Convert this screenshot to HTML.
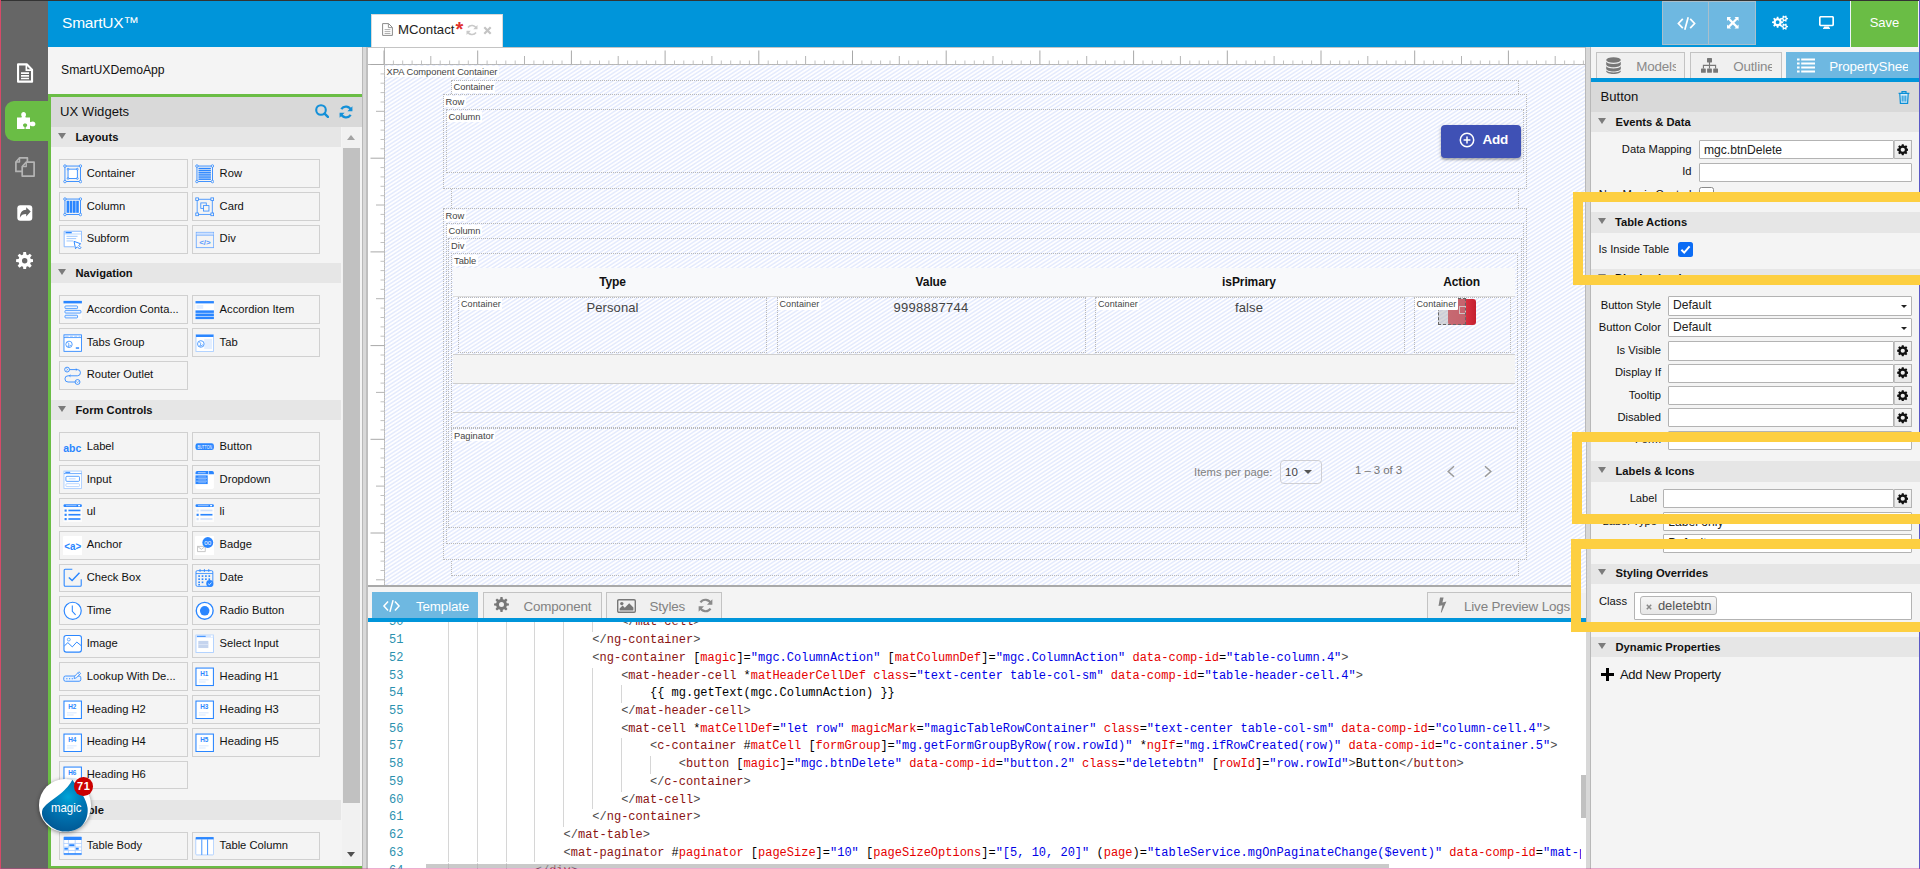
<!DOCTYPE html>
<html lang="en">
<head>
<meta charset="utf-8">
<title>SmartUX</title>
<style>
*{box-sizing:border-box}
html,body{margin:0;padding:0}
body{width:1920px;height:869px;overflow:hidden;position:relative;background:#f4f4f4;font-family:"Liberation Sans",Arial,sans-serif;font-size:12px;color:#111}
.a{position:absolute}
svg{display:block}
/* frame */
#topline{left:0;top:0;width:1920px;height:1px;background:#333}
#leftline{left:0;top:0;width:1px;height:869px;background:#d64a68}
#side{left:1px;top:1px;width:47px;height:868px;background:#666}
#top{left:48px;top:1px;width:1872px;height:46px;background:#0095da}
#brand{left:62px;top:13.300px;color:#fff;font-size:15.500px;line-height:20px;letter-spacing:-0.2px}
/* left panel */
#lp{left:48px;top:47px;width:314px;height:822px;background:#f4f4f4}
#app{left:61px;top:62px;font-size:12.200px;line-height:16px;color:#111}
#gtop{left:48px;top:94px;width:314px;height:3px;background:#6abd45}
#gleft{left:48px;top:94px;width:3px;height:775px;background:#6abd45}
#gbot{left:48px;top:865.500px;width:314px;height:3.500px;background:#6abd45}
#uxh{left:51px;top:97px;width:311px;height:30px;background:#d9d9d9}
#uxt{left:60px;top:103px;font-size:13.100px;line-height:18px;color:#111}
.sh{left:51px;width:290px;height:20.200px;background:#e6e6e6}
.sh b{position:absolute;left:24.500px;top:3.300px;font-size:11.200px;line-height:14px}
.tri{position:absolute;left:6.800px;top:5.800px;width:0;height:0;border-left:4px solid transparent;border-right:4px solid transparent;border-top:6.500px solid #7b7b7b}
.w{height:28.800px;border:1px solid #d0d0d0;background:#f4f4f4}
.w span{position:absolute;left:26.500px;top:5.500px;font-size:11.200px;line-height:14px;white-space:nowrap;color:#111}
.w svg{position:absolute;left:2.400px;top:3.900px;width:19.400px;height:19.600px}
.c2 svg{left:1.800px}
.c1{left:59.200px;width:128.600px}
.c2{left:192.100px;width:127.800px}
#ftab{left:371px;top:14px;width:131.500px;height:33px;background:#fff;border:1px solid #d9d9d9;border-bottom:none}
#ftab span{position:absolute;left:26px;top:6.700px;font-size:13.200px;line-height:16px;color:#222}
#ftab i{position:absolute;left:83.500px;top:3.600px;font-style:normal;color:#e0312f;font-size:20px;line-height:20px;font-weight:bold}
.tb{top:1px;height:44px;background:#6eb8e1;border:1px solid #a9bfcc}
#save{left:1851px;top:1px;width:67px;height:46px;background:#6abd45;color:#fff;font-size:13px;line-height:44px;text-align:center}
#spl1{left:361.600px;top:47px;width:6.200px;height:822px;background:linear-gradient(90deg,#b9b9b9 0,#b9b9b9 1.300px,#d9d9d9 1.300px,#d9d9d9 4.500px,#bfbfbf 4.500px,#bfbfbf 6.200px)}
#spl2{left:1585.200px;top:47px;width:5.800px;height:822px;background:linear-gradient(90deg,#b9b9b9 0,#b9b9b9 .8px,#d8d8d8 .8px,#d8d8d8 4.700px,#b8b8b8 4.700px,#b8b8b8 5.800px)}
.st{background:repeating-linear-gradient(147deg,#fff 0,#fdfdff .8px,#e5ebfd 1.600px,#e5ebfd 2.300px,#fdfdff 3.100px,#fff 3.250px) fixed}
#cv{left:368px;top:47px;width:1217.500px;height:538px;background:#fff;overflow:hidden}
.d{border:1px dotted #b9b9b9}
.lb{background:#fff;color:#444;font-size:9.300px;line-height:11px;height:11.500px;padding:1.300px 1.500px 0;overflow:hidden;white-space:nowrap;border-radius:1px}
.lb2{font-size:9px;letter-spacing:.1px}
#rh{left:368px;top:47px;width:1217.500px;height:17.500px;background:#fff;border-bottom:1px solid #b5b5b5}
#rv{left:368px;top:64.500px;width:16.500px;height:520.500px;background:#fff;border-right:1px solid #c5c5c5}
.th{font-weight:bold;font-size:12px;line-height:14px;color:#111;text-align:center;top:275px;letter-spacing:-.1px}
.td{font-size:13px;line-height:15px;color:#444;text-align:center;top:300px;letter-spacing:.1px}
#bt{left:368px;top:586.500px;width:1217.500px;height:31.500px;background:#f4f4f4}
.tab{top:592.200px;height:25.800px;border:1px solid #c3c3c3;border-bottom:none;background:#f0f0f0;color:#828282;font-size:13.400px;line-height:16px;letter-spacing:-.15px}
.tab span{position:absolute;top:5.500px;white-space:nowrap}
.tab.on{background:#6eb8e1;border-color:#6eb8e1;color:#fff}
#bl{left:368px;top:617.700px;width:1217.500px;height:4.300px;background:#0095da}
#ed{left:368px;top:622px;width:1213px;height:247px;background:#fff;overflow:hidden;font-family:"Liberation Mono","DejaVu Sans Mono",monospace;font-size:12px}
#ed .l{position:absolute;left:0;height:17.720px;line-height:17.720px;white-space:pre;width:1213px;color:#000}
#ed .n{position:absolute;left:0;width:35.500px;text-align:right;color:#2b91af}
#ed .c{position:absolute;left:51.500px}
#ed .g{position:absolute;top:0;width:1px;height:17.720px;background:#d6d6d6}
.t{color:#8a1212}.p{color:#4a4a4a}.k{color:#e50000}.v{color:#0000e6}
#rp{left:1591px;top:47px;width:329px;height:822px;background:#f4f4f4}
.rt{top:52.400px;height:26.200px;border:1px solid #c3c3c3;border-bottom:none;background:#f0f0f0;color:#8a8a8a;font-size:13.400px;line-height:16px;overflow:hidden;letter-spacing:-.15px}
.rt span{position:absolute;top:5.500px;white-space:nowrap;overflow:hidden}
.rt.on{background:#6eb8e1;border-color:#6eb8e1;color:#fff}
#rbl{left:1591px;top:78.400px;width:329px;height:3.600px;background:#0095da}
#rh1{left:1591px;top:82px;width:329px;height:30px;background:#d9d9d9}
.rs{left:1591px;width:329px;height:20.200px;background:#e6e6e6}
.rs b{position:absolute;left:24.500px;top:2.600px;font-size:11.200px;line-height:14px;color:#111}
.rs .tri{left:7.200px;top:5.700px}
.pl{font-size:11.200px;line-height:14px;color:#111;text-align:right;white-space:nowrap;margin-top:-.7px}
.in{height:19.200px;background:#fff;border:1px solid #b3b3b3;border-radius:1px;font-size:12.100px;line-height:18.600px;color:#222;padding-left:4px;white-space:nowrap;overflow:hidden}
.gb{width:18.500px;height:19.200px;border:1px solid #b3b3b3;border-left-color:#c4c4c4;background:linear-gradient(#f5f5f5,#e9e9e9)}
.gb svg{position:absolute;left:2.200px;top:2.800px;width:11.500px;height:11.500px}
.car{width:0;height:0;border-left:3px solid transparent;border-right:3px solid transparent;border-top:3.500px solid #222}
.yb{border:10px solid #fdcf41;border-right:none}
</style>
</head>
<body>

<div class="a" id="lp"></div>
<div class="a" id="side"></div>
<div class="a" id="top"></div>
<div class="a" id="topline"></div>
<div class="a" id="leftline"></div>
<div class="a" id="brand">SmartUX&#8482;</div>
<div class="a" id="app">SmartUXDemoApp</div>
<div class="a" id="gtop"></div><div class="a" id="gleft"></div><div class="a" id="gbot"></div>
<div class="a" id="uxh"></div><div class="a" id="uxt">UX Widgets</div>
<div class="a" style="left:5px;top:101px;width:46px;height:39.5px;background:#6abd45;border-radius:9px 0 0 9px"></div>
<div class="a" style="left:15.8px;top:63.4px"><svg width="18" height="20" viewBox="0 0 17 19"><path d="M1.900 1.300h8.300l5 5v11.400H1.900z" fill="none" stroke="#fff" stroke-width="2" stroke-linejoin="round"/><path d="M9.800 1.500v5.200h5.200" fill="none" stroke="#fff" stroke-width="1.600"/><path d="M4.700 9.600h7.600M4.700 12.200h7.600M4.700 14.800h7.600" stroke="#fff" stroke-width="1.500"/></svg></div>
<div class="a" style="left:16px;top:110px"><svg width="21" height="20" viewBox="0 0 21 20"><path d="M1 7.4h4.3c.5 0 .7-.4.5-.8C5.4 6 5.2 5.400 5.200 4.700 5.200 3.100 6.200 2 7.600 2s2.400 1.100 2.400 2.700c0 .7-.2 1.300-.6 1.900-.2.400 0 .8.500.8H14v4.200c0 .5.400.7.800.5.600-.4 1.200-.6 1.900-.6 1.600 0 2.700 1 2.700 2.400s-1.100 2.400-2.700 2.400c-.7 0-1.300-.2-1.900-.6-.4-.2-.8 0-.8.500V19H9.600v-1.300c0-.5.300-.7.600-.9.600-.3 1-.8 1-1.500 0-1-.9-1.700-2.100-1.700S7 14.300 7 15.300c0 .7.400 1.200 1 1.500.3.200.6.400.6.900V19H1z" fill="#fff"/></svg></div>
<div class="a" style="left:14.5px;top:156.5px"><svg width="20" height="20" viewBox="0 0 20 20"><g fill="none" stroke="#b4b4b4" stroke-width="1.7" stroke-linejoin="round"><path d="M7.2 14.400H.9V5l3.700-4.100h7.800v4.300"/><path d="M4.600.9V5H.9" stroke-width="1.300"/><path d="M7.200 9.500l4.100-4.300h7.800v13.900H7.200z"/><path d="M11.300 5.200v4.300H7.200" stroke-width="1.300"/></g></svg></div>
<div class="a" style="left:17px;top:205px"><svg width="16" height="16" viewBox="0 0 16 16"><rect x=".3" y=".3" width="15" height="15.400" rx="3" fill="#fff"/><path d="M13.700 6.400L9.200 2.300v2.500C5.300 5 2.900 7.500 2.900 12.800c1.300-2.700 3.100-3.700 6.300-3.700v2.500z" fill="#666"/></svg></div>
<div class="a" style="left:15.7px;top:252px"><svg width="17.4" height="17.4" viewBox="0 0 17.4 17.4"><path d="M14.78 7.06 L17.29 7.33 L17.29 10.07 L14.78 10.34 L14.16 11.84 L15.74 13.80 L13.80 15.74 L11.84 14.16 L10.34 14.78 L10.07 17.29 L7.33 17.29 L7.06 14.78 L5.56 14.16 L3.60 15.74 L1.66 13.80 L3.24 11.84 L2.62 10.34 L0.11 10.07 L0.11 7.33 L2.62 7.06 L3.24 5.56 L1.66 3.60 L3.60 1.66 L5.56 3.24 L7.06 2.62 L7.33 0.11 L10.07 0.11 L10.34 2.62 L11.84 3.24 L13.80 1.66 L15.74 3.60 L14.16 5.56Z M11.40 8.70 A2.7 2.7 0 1 0 6.00 8.70 A2.7 2.7 0 1 0 11.40 8.70Z" fill="#fff" fill-rule="evenodd"/></svg></div>
<div class="a sh" style="top:127px"><i class="tri"></i><b>Layouts</b></div>
<div class="a w c1" style="top:159.20px"><svg width="20" height="20" viewBox="0 0 20 20"><rect x="2" y="2" width="16" height="16" fill="none" stroke="#2a86ff" stroke-width=".9"/><rect x="5.2" y="5.2" width="9.6" height="9.6" fill="#fff" stroke="#2a86ff" stroke-width=".9"/><circle cx="2" cy="2" r="1.3" fill="#f4f4f4" stroke="#2a86ff" stroke-width=".8"/><circle cx="18" cy="2" r="1.3" fill="#f4f4f4" stroke="#2a86ff" stroke-width=".8"/><circle cx="2" cy="18" r="1.3" fill="#f4f4f4" stroke="#2a86ff" stroke-width=".8"/><circle cx="18" cy="18" r="1.3" fill="#f4f4f4" stroke="#2a86ff" stroke-width=".8"/><circle cx="5.2" cy="5.2" r="0.9" fill="#f4f4f4" stroke="#2a86ff" stroke-width=".8"/><circle cx="14.8" cy="5.2" r="0.9" fill="#f4f4f4" stroke="#2a86ff" stroke-width=".8"/><circle cx="5.2" cy="14.8" r="0.9" fill="#f4f4f4" stroke="#2a86ff" stroke-width=".8"/><circle cx="14.8" cy="14.8" r="0.9" fill="#f4f4f4" stroke="#2a86ff" stroke-width=".8"/></svg><span>Container</span></div>
<div class="a w c2" style="top:159.20px"><svg width="20" height="20" viewBox="0 0 20 20"><rect x="2" y="2" width="16" height="16" fill="none" stroke="#2a86ff" stroke-width=".9"/><rect x="3.6" y="3.8" width="12.8" height="1.5" fill="#2a86ff"/><rect x="3.6" y="6.0" width="12.8" height="1.5" fill="#2a86ff"/><rect x="3.6" y="8.2" width="12.8" height="1.5" fill="#2a86ff"/><rect x="3.6" y="10.4" width="12.8" height="1.5" fill="#2a86ff"/><rect x="3.6" y="12.6" width="12.8" height="1.5" fill="#2a86ff"/><rect x="3.6" y="14.8" width="12.8" height="1.5" fill="#2a86ff"/><circle cx="2" cy="2" r="1.3" fill="#f4f4f4" stroke="#2a86ff" stroke-width=".8"/><circle cx="18" cy="2" r="1.3" fill="#f4f4f4" stroke="#2a86ff" stroke-width=".8"/><circle cx="2" cy="18" r="1.3" fill="#f4f4f4" stroke="#2a86ff" stroke-width=".8"/><circle cx="18" cy="18" r="1.3" fill="#f4f4f4" stroke="#2a86ff" stroke-width=".8"/></svg><span>Row</span></div>
<div class="a w c1" style="top:192.05px"><svg width="20" height="20" viewBox="0 0 20 20"><rect x="2" y="2" width="16" height="16" fill="none" stroke="#2a86ff" stroke-width=".9"/><rect x="3.7" y="3.8" width="2.7" height="12.4" fill="#2a86ff"/><rect x="7.0" y="3.8" width="2.7" height="12.4" fill="#2a86ff"/><rect x="10.3" y="3.8" width="2.7" height="12.4" fill="#2a86ff"/><rect x="13.6" y="3.8" width="2.7" height="12.4" fill="#2a86ff"/><circle cx="2" cy="2" r="1.3" fill="#f4f4f4" stroke="#2a86ff" stroke-width=".8"/><circle cx="18" cy="2" r="1.3" fill="#f4f4f4" stroke="#2a86ff" stroke-width=".8"/><circle cx="2" cy="18" r="1.3" fill="#f4f4f4" stroke="#2a86ff" stroke-width=".8"/><circle cx="18" cy="18" r="1.3" fill="#f4f4f4" stroke="#2a86ff" stroke-width=".8"/></svg><span>Column</span></div>
<div class="a w c2" style="top:192.05px"><svg width="20" height="20" viewBox="0 0 20 20"><rect x="2.2" y="2.2" width="15.6" height="15.6" fill="none" stroke="#2a86ff" stroke-width=".8"/><rect x="6" y="6" width="5.6" height="5.6" fill="none" stroke="#2a86ff" stroke-width=".8"/><rect x="8.8" y="8.8" width="5.6" height="5.6" fill="#f4f4f4" stroke="#2a86ff" stroke-width=".8"/><rect x="0.8000000000000003" y="0.8000000000000003" width="2.8" height="2.8" fill="#f4f4f4" stroke="#2a86ff" stroke-width=".8"/><rect x="16.400000000000002" y="0.8000000000000003" width="2.8" height="2.8" fill="#f4f4f4" stroke="#2a86ff" stroke-width=".8"/><rect x="0.8000000000000003" y="16.400000000000002" width="2.8" height="2.8" fill="#f4f4f4" stroke="#2a86ff" stroke-width=".8"/><rect x="16.400000000000002" y="16.400000000000002" width="2.8" height="2.8" fill="#f4f4f4" stroke="#2a86ff" stroke-width=".8"/></svg><span>Card</span></div>
<div class="a w c1" style="top:224.90px"><svg width="20" height="20" viewBox="0 0 20 20"><path d="M11.500 17.200H1.200V1.200h18v11" fill="#fff" stroke="#7db3ff" stroke-width=".9"/><path d="M1.200 4h18" stroke="#9cc6ff" stroke-width=".7"/><path d="M2.600 2.600h6.400" stroke="#2a86ff" stroke-width="1.400"/><path d="M3.600 6.400h11.400M3.600 8.800h10M3.600 11.200h7" stroke="#9cc6ff" stroke-width="1"/><path d="M11.400 11.600l1.500 7.600 1.900-2 2.300 2.300 1.400-1.400-2.300-2.300 2-1.700z" fill="#fff" stroke="#2a86ff" stroke-width="1" stroke-linejoin="round"/></svg><span>Subform</span></div>
<div class="a w c2" style="top:224.90px"><svg width="20" height="20" viewBox="0 0 20 20"><rect x="1.300" y="2.300" width="18" height="15.800" fill="#f4f4f4" stroke="#6aa8ff" stroke-width=".9"/><rect x="1.700" y="2.700" width="17.200" height="2.300" fill="#cfe2ff"/><path d="M1.300 5.300h18" stroke="#6aa8ff" stroke-width=".8"/><text x="10.300" y="14.900" font-family="Liberation Sans,Arial,sans-serif" font-size="8.300" font-weight="bold" fill="#5b9bff" text-anchor="middle">&lt;/&gt;</text></svg><span>Div</span></div>
<div class="a sh" style="top:263px"><i class="tri"></i><b>Navigation</b></div>
<div class="a w c1" style="top:295.20px"><svg width="20" height="20" viewBox="0 0 20 20"><rect x="0.5" y="0.5" width="19" height="19" fill="#fff" opacity=".6"/><rect x="0.5" y="0.8" width="19" height="2.6" fill="#2a86ff"/><rect x="2" y="6" width="13" height="2.8" rx=".8" fill="#eaf3ff" stroke="#2a86ff" stroke-width=".8"/><rect x="2" y="10.6" width="16.5" height="2.8" rx=".8" fill="#eaf3ff" stroke="#2a86ff" stroke-width=".8"/><rect x="2" y="15.6" width="13" height="2.8" rx=".8" fill="#eaf3ff" stroke="#2a86ff" stroke-width=".8"/></svg><span>Accordion Conta...</span></div>
<div class="a w c2" style="top:295.20px"><svg width="20" height="20" viewBox="0 0 20 20"><rect x="0.5" y="1" width="19" height="18.5" fill="#fff"/><rect x="0.5" y="1" width="19" height="2.4" fill="#2a86ff"/><rect x="1.5" y="5" width="7" height="4" fill="#e4efff"/><rect x="0.5" y="10.6" width="19" height="2.6" fill="#2a86ff"/><rect x="0.5" y="13.8" width="19" height="2.6" fill="#2a86ff"/><rect x="0.5" y="17" width="19" height="2.6" fill="#2a86ff"/></svg><span>Accordion Item</span></div>
<div class="a w c1" style="top:328.05px"><svg width="20" height="20" viewBox="0 0 20 20"><rect x="1" y="1.8" width="18" height="17" fill="#fff" stroke="#2a86ff" stroke-width=".9"/><path d="M1 4.6h18" stroke="#2a86ff" stroke-width=".8"/><path d="M2.2 3.2h3.6M7.2 3.2h3M11.6 3.2h3M16 3.2h2" stroke="#a9cdff" stroke-width="1.3"/><circle cx="6.2" cy="11.6" r="3.3" fill="none" stroke="#2a86ff" stroke-width=".8"/><path d="M4.550000000000001 9.62q2.9699999999999998 0.9899999999999999 0.9899999999999999 3.3t2.9699999999999998 -0.66" fill="none" stroke="#2a86ff" stroke-width=".7"/><path d="M13.2 15.4h3.4" stroke="#2a86ff" stroke-width="1.5"/></svg><span>Tabs Group</span></div>
<div class="a w c2" style="top:328.05px"><svg width="20" height="20" viewBox="0 0 20 20"><rect x="1" y="1.6" width="18" height="17.4" fill="#fff" stroke="#a9cdff" stroke-width=".9"/><rect x="1" y="1.6" width="18" height="2.4" fill="#2a86ff"/><rect x="9.5" y="6" width="8" height="10.5" fill="#e4efff"/><circle cx="6" cy="11.2" r="3.4" fill="none" stroke="#2a86ff" stroke-width=".8"/><path d="M4.3 9.16q3.06 1.02 1.02 3.4t3.06 -0.68" fill="none" stroke="#2a86ff" stroke-width=".7"/></svg><span>Tab</span></div>
<div class="a w c1" style="top:360.90px"><svg width="20" height="20" viewBox="0 0 20 20"><path d="M6.6 3.6h8.2a3.2 3.2 0 0 1 0 6.4H5.2a3.2 3.2 0 0 0 0 6.4h7.6" fill="none" stroke="#2a86ff" stroke-width=".9"/><circle cx="4.2" cy="3.6" r="2.5" fill="#f4f4f4" stroke="#2a86ff" stroke-width=".9"/><circle cx="15" cy="16.4" r="2.5" fill="#f4f4f4" stroke="#2a86ff" stroke-width=".9"/><path d="M3.6 2.6l1.2 1-1.2 1M13.9 15.8l1.1 1.1 1.1-1.1" fill="none" stroke="#2a86ff" stroke-width=".7"/><path d="M13.2 2.6l1.3 1-1.3 1M7.8 9l-1.3 1 1.3 1" fill="none" stroke="#2a86ff" stroke-width=".7"/></svg><span>Router Outlet</span></div>
<div class="a sh" style="top:400px"><i class="tri"></i><b>Form Controls</b></div>
<div class="a w c1" style="top:432.20px"><svg width="21" height="20" viewBox="0 0 21 20"><text x="10" y="15.8" font-family="Liberation Sans,Arial,sans-serif" font-size="12.5" font-weight="bold" fill="#2a86ff" text-anchor="middle" textLength="19.5" lengthAdjust="spacingAndGlyphs">abc</text></svg><span>Label</span></div>
<div class="a w c2" style="top:432.20px"><svg width="20" height="20" viewBox="0 0 20 20"><rect x=".5" y="6.4" width="19" height="7" rx="2.4" fill="#2a86ff"/><text x="10" y="12" font-family="Liberation Sans,Arial,sans-serif" font-size="4.6" fill="#fff" text-anchor="middle" textLength="15" lengthAdjust="spacingAndGlyphs">BUTTON</text></svg><span>Button</span></div>
<div class="a w c1" style="top:465.05px"><svg width="20" height="20" viewBox="0 0 20 20"><rect x="1" y="1" width="18" height="18" fill="#fff" stroke="#a9cdff" stroke-width=".9"/><path d="M1 3.6h18" stroke="#2a86ff" stroke-width=".7"/><path d="M2.4 2.3h5" stroke="#2a86ff" stroke-width="1.1"/><rect x="3" y="6.4" width="14" height="5.2" rx="1" fill="#fff" stroke="#2a86ff" stroke-width=".8"/><path d="M6 9h7" stroke="#a9cdff" stroke-width=".8"/><rect x="3" y="14" width="14" height="3" rx=".8" fill="#fff" stroke="#a9cdff" stroke-width=".8"/></svg><span>Input</span></div>
<div class="a w c2" style="top:465.05px"><svg width="20" height="20" viewBox="0 0 20 20"><rect x=".5" y="1" width="19" height="18.5" rx="1.8" fill="#fff"/><path d="M.5 4.4V2.8a1.8 1.8 0 0 1 1.8-1.8h15.4a1.8 1.8 0 0 1 1.8 1.8v1.6z" fill="#2a86ff"/><path d="M14 1v3.4" stroke="#fff" stroke-width=".7"/><path d="M3 2.7h8" stroke="#cfe2ff" stroke-width=".8"/><rect x=".5" y="5.4" width="12.6" height="9" fill="#2a86ff"/><path d="M1.2 8.4h11.2M1.2 11.4h11.2" stroke="#d6e6ff" stroke-width=".7"/><path d="M3.4 7h8M3.4 10h8M3.4 13h8" stroke="#8fbcff" stroke-width=".8"/></svg><span>Dropdown</span></div>
<div class="a w c1" style="top:497.90px"><svg width="20" height="20" viewBox="0 0 20 20"><rect x=".5" y="1" width="19" height="18.5" fill="#fff" opacity=".75"/><rect x=".5" y="1.2" width="19" height="2.9" rx="1.2" fill="#2a86ff"/><path d="M3 2.65h11" stroke="#cfe2ff" stroke-width=".7"/><rect x="15.6" y="2" width="2" height="1.3" fill="#fff"/><rect x="1.6" y="6.6" width="2.2" height="2.2" fill="#2a86ff"/><path d="M5.6 7.6h12.4" stroke="#2a86ff" stroke-width="1.7"/><rect x="1.6" y="11" width="2.2" height="2.2" fill="#2a86ff"/><path d="M5.6 12h12.4" stroke="#2a86ff" stroke-width="1.7"/><rect x="1.6" y="15.399999999999999" width="2.2" height="2.2" fill="#2a86ff"/><path d="M5.6 16.4h12.4" stroke="#2a86ff" stroke-width="1.7"/></svg><span>ul</span></div>
<div class="a w c2" style="top:497.90px"><svg width="20" height="20" viewBox="0 0 20 20"><rect x=".5" y="1" width="19" height="18.5" fill="#fff" opacity=".75"/><rect x=".5" y="1.2" width="19" height="2.9" rx="1.2" fill="#2a86ff"/><path d="M3 2.65h11" stroke="#cfe2ff" stroke-width=".7"/><rect x="15.6" y="2" width="2" height="1.3" fill="#fff"/><rect x="1.6" y="6.6" width="2.2" height="2.2" fill="#cfe0fa"/><path d="M5.6 7.6h12.4" stroke="#cfe0fa" stroke-width="1.7"/><rect x="1.6" y="11" width="2.2" height="2.2" fill="#2a86ff"/><path d="M5.6 12h12.4" stroke="#2a86ff" stroke-width="1.7"/><rect x="1.6" y="15.399999999999999" width="2.2" height="2.2" fill="#cfe0fa"/><path d="M5.6 16.4h12.4" stroke="#cfe0fa" stroke-width="1.7"/></svg><span>li</span></div>
<div class="a w c1" style="top:530.75px"><svg width="20" height="20" viewBox="0 0 20 20"><rect x="0" y="0" width="20" height="20" rx="1" fill="#fff"/><text x="10" y="14.4" font-family="Liberation Sans,Arial,sans-serif" font-size="10.5" font-weight="bold" fill="#2a86ff" text-anchor="middle" textLength="17.5" lengthAdjust="spacingAndGlyphs">&lt;a&gt;</text></svg><span>Anchor</span></div>
<div class="a w c2" style="top:530.75px"><svg width="20" height="20" viewBox="0 0 20 20"><rect x="0" y="0" width="20" height="20" rx="1" fill="#fff"/><path d="M2.6 10.6h8v5.4h-8zM2.6 10.6l4 3 4-3" fill="#fff" stroke="#b8b8b8" stroke-width=".8"/><circle cx="13.2" cy="6.6" r="5.6" fill="#2a86ff"/><text x="13.2" y="9" font-family="Liberation Sans,Arial,sans-serif" font-size="6.4" fill="#fff" text-anchor="middle">00</text></svg><span>Badge</span></div>
<div class="a w c1" style="top:563.60px"><svg width="20" height="20" viewBox="0 0 20 20"><path d="M9.6 1.2H2.2a1 1 0 0 0-1 1v15.6a1 1 0 0 0 1 1h15.6a1 1 0 0 0 1-1V11.4" fill="none" stroke="#2a86ff" stroke-width="1.1"/><path d="M6 9.6l3.4 3.2 7.6-8" fill="none" stroke="#2a86ff" stroke-width="1.5"/></svg><span>Check Box</span></div>
<div class="a w c2" style="top:563.60px"><svg width="20" height="20" viewBox="0 0 20 20"><rect x="1" y="2.6" width="17.4" height="16.2" rx="1.4" fill="#f4f4f4" stroke="#2a86ff" stroke-width=".9"/><path d="M1 5.6h17.4" stroke="#2a86ff" stroke-width=".8"/><path d="M5.2 1v3M9.7 1v3M14.2 1v3" stroke="#2a86ff" stroke-width=".9"/><rect x="3.4" y="7.4" width="1.7" height="1.7" fill="#2a86ff"/><rect x="6.9" y="7.4" width="1.7" height="1.7" fill="#2a86ff"/><rect x="10.4" y="7.4" width="1.7" height="1.7" fill="#2a86ff"/><rect x="13.9" y="7.4" width="1.7" height="1.7" fill="#2a86ff"/><rect x="3.4" y="10.6" width="1.7" height="1.7" fill="#2a86ff"/><rect x="6.9" y="10.6" width="1.7" height="1.7" fill="#2a86ff"/><rect x="10.4" y="10.6" width="1.7" height="1.7" fill="#2a86ff"/><rect x="13.9" y="10.6" width="1.7" height="1.7" fill="#2a86ff"/><rect x="3.4" y="13.8" width="1.7" height="1.7" fill="#2a86ff"/><rect x="6.9" y="13.8" width="1.7" height="1.7" fill="#2a86ff"/><rect x="3.4" y="16.4" width="1.7" height="1.4" fill="#2a86ff"/><circle cx="15.2" cy="16" r="3.6" fill="#2a86ff"/><path d="M13.5 16l1.3 1.3 2.2-2.4" fill="none" stroke="#fff" stroke-width=".8"/></svg><span>Date</span></div>
<div class="a w c1" style="top:596.45px"><svg width="20" height="20" viewBox="0 0 20 20"><circle cx="10" cy="10" r="8.8" fill="#fff" stroke="#2a86ff" stroke-width="1.2"/><path d="M9.6 4.6v6l3.4 3.6" fill="none" stroke="#2a86ff" stroke-width="1.1"/></svg><span>Time</span></div>
<div class="a w c2" style="top:596.45px"><svg width="20" height="20" viewBox="0 0 20 20"><circle cx="10" cy="10" r="8.7" fill="#fff" stroke="#2a86ff" stroke-width="1.4"/><circle cx="10" cy="10" r="4.9" fill="#2a86ff"/></svg><span>Radio Button</span></div>
<div class="a w c1" style="top:629.30px"><svg width="20" height="20" viewBox="0 0 20 20"><rect x="1" y="1.4" width="18" height="17.2" rx="2.4" fill="#fff" stroke="#2a86ff" stroke-width="1.1"/><path d="M1.4 12.2l3.6-3.4 4.6 4.4 4.6-5 4.4 3.6" fill="none" stroke="#2a86ff" stroke-width="1"/><circle cx="6" cy="5.6" r="1.5" fill="none" stroke="#2a86ff" stroke-width=".7"/></svg><span>Image</span></div>
<div class="a w c2" style="top:629.30px"><svg width="20" height="20" viewBox="0 0 20 20"><rect x="1" y="1" width="18" height="18" fill="#fff" stroke="#a9cdff" stroke-width=".9"/><rect x="1" y="1" width="18" height="2.6" fill="#d4e5ff"/><path d="M2 2.3h9" stroke="#2a86ff" stroke-width="1"/><rect x="16.4" y="1.4" width="1.8" height="1.6" fill="#fff"/><rect x="3.4" y="7" width="10.4" height="7.4" fill="#c4d4ee"/><path d="M3.4 10.7h10.4" stroke="#e3ecfa" stroke-width=".7"/></svg><span>Select Input</span></div>
<div class="a w c1" style="top:662.15px"><svg width="20" height="20" viewBox="0 0 20 20"><rect x=".8" y="9.2" width="17.6" height="5.4" rx="1.8" fill="#eaf3ff" stroke="#2a86ff" stroke-width=".9"/><path d="M3.4 12h1.2M6.2 12h1.2M9 12h1.2" stroke="#2a86ff" stroke-width="1"/><path d="M11.4 11.8l.6-2.4 4.4-4.6 1.8 1.7-4.4 4.6z" fill="#f4f4f4" stroke="#2a86ff" stroke-width=".8" stroke-linejoin="round"/><path d="M15.2 6l1.8 1.7" stroke="#2a86ff" stroke-width=".7"/></svg><span>Lookup With De...</span></div>
<div class="a w c2" style="top:662.15px"><svg width="20" height="20" viewBox="0 0 20 20"><rect x="1" y="1" width="18" height="18" fill="#fff" stroke="#2a86ff" stroke-width="1.1"/><text x="9.6" y="9.6" font-family="Liberation Sans,Arial,sans-serif" font-size="6.6" font-weight="bold" fill="#2a86ff" text-anchor="middle">H1</text><path d="M4 13h10M4 15.4h7" stroke="#e4efff" stroke-width="1.4"/></svg><span>Heading H1</span></div>
<div class="a w c1" style="top:695.00px"><svg width="20" height="20" viewBox="0 0 20 20"><rect x="1" y="1" width="18" height="18" fill="#fff" stroke="#2a86ff" stroke-width="1.1"/><text x="9.6" y="9.6" font-family="Liberation Sans,Arial,sans-serif" font-size="6.6" font-weight="bold" fill="#2a86ff" text-anchor="middle">H2</text><path d="M4 13h10M4 15.4h7" stroke="#e4efff" stroke-width="1.4"/></svg><span>Heading H2</span></div>
<div class="a w c2" style="top:695.00px"><svg width="20" height="20" viewBox="0 0 20 20"><rect x="1" y="1" width="18" height="18" fill="#fff" stroke="#2a86ff" stroke-width="1.1"/><text x="9.6" y="9.6" font-family="Liberation Sans,Arial,sans-serif" font-size="6.6" font-weight="bold" fill="#2a86ff" text-anchor="middle">H3</text><path d="M4 13h10M4 15.4h7" stroke="#e4efff" stroke-width="1.4"/></svg><span>Heading H3</span></div>
<div class="a w c1" style="top:727.85px"><svg width="20" height="20" viewBox="0 0 20 20"><rect x="1" y="1" width="18" height="18" fill="#fff" stroke="#2a86ff" stroke-width="1.1"/><text x="9.6" y="9.6" font-family="Liberation Sans,Arial,sans-serif" font-size="6.6" font-weight="bold" fill="#2a86ff" text-anchor="middle">H4</text><path d="M4 13h10M4 15.4h7" stroke="#e4efff" stroke-width="1.4"/></svg><span>Heading H4</span></div>
<div class="a w c2" style="top:727.85px"><svg width="20" height="20" viewBox="0 0 20 20"><rect x="1" y="1" width="18" height="18" fill="#fff" stroke="#2a86ff" stroke-width="1.1"/><text x="9.6" y="9.6" font-family="Liberation Sans,Arial,sans-serif" font-size="6.6" font-weight="bold" fill="#2a86ff" text-anchor="middle">H5</text><path d="M4 13h10M4 15.4h7" stroke="#e4efff" stroke-width="1.4"/></svg><span>Heading H5</span></div>
<div class="a w c1" style="top:760.70px"><svg width="20" height="20" viewBox="0 0 20 20"><rect x="1" y="1" width="18" height="18" fill="#fff" stroke="#2a86ff" stroke-width="1.1"/><text x="9.6" y="9.6" font-family="Liberation Sans,Arial,sans-serif" font-size="6.6" font-weight="bold" fill="#2a86ff" text-anchor="middle">H6</text><path d="M4 13h10M4 15.4h7" stroke="#e4efff" stroke-width="1.4"/></svg><span>Heading H6</span></div>
<div class="a sh" style="top:799.5px"><i class="tri"></i><b>Table</b></div>
<div class="a w c1" style="top:831.60px"><svg width="20" height="20" viewBox="0 0 20 20"><rect x=".8" y=".8" width="18.4" height="18.4" rx="1" fill="#fff" stroke="#a9cdff" stroke-width=".8"/><rect x=".8" y=".8" width="18.4" height="3.2" fill="#2a86ff"/><path d="M.8 7.6h18.4M.8 11.2h18.4M.8 14.8h18.4M5.6 4v15M12.6 4v15" stroke="#a9cdff" stroke-width=".8"/><rect x="6.4" y="8.4" width="5.4" height="2" fill="#2a86ff"/><rect x="1.4" y="12" width="3.6" height="2" fill="#2a86ff"/><rect x="13.2" y="12" width="3" height="2" fill="#2a86ff"/><rect x=".8" y="17.6" width="18.4" height="1.6" fill="#2a86ff"/></svg><span>Table Body</span></div>
<div class="a w c2" style="top:831.60px"><svg width="20" height="20" viewBox="0 0 20 20"><rect x=".8" y="1.4" width="18.4" height="18" rx="1" fill="#fff" stroke="#a9cdff" stroke-width=".9"/><rect x=".8" y="1" width="18.4" height="2.4" fill="#2a86ff"/><path d="M7 3.4v16M13 3.4v16" stroke="#2a86ff" stroke-width=".9"/></svg><span>Table Column</span></div>
<div class="a" style="left:315px;top:104px"><svg width="14" height="14" viewBox="0 0 14 14"><circle cx="6" cy="6" r="4.800" fill="none" stroke="#1490d8" stroke-width="2.100"/><path d="M9.600 9.600l3.300 3.200" stroke="#1490d8" stroke-width="2.500" stroke-linecap="round"/></svg></div>
<div class="a" style="left:339px;top:104.5px"><svg width="14" height="14" viewBox="0 0 14 14"><path d="M12.200 5.400A5.600 5.600 0 0 0 2.300 4.100" fill="none" stroke="#1490d8" stroke-width="2.300"/><path d="M1.800 8.600a5.600 5.600 0 0 0 9.900 1.300" fill="none" stroke="#1490d8" stroke-width="2.300"/><path d="M13.400 1.200v5h-5zM.6 12.800v-5h5z" fill="#1490d8"/></svg></div>
<div class="a" style="left:341.5px;top:127px;width:18.5px;height:738px;background:#f1f1f1"></div>
<div class="a" style="left:342.800px;top:148px;width:17px;height:654.500px;background:#c1c1c1"></div>
<div class="a" style="left:346.500px;top:134.500px;width:0;height:0;border-left:4.500px solid transparent;border-right:4.500px solid transparent;border-bottom:5px solid #a3a3a3"></div>
<div class="a" style="left:346.500px;top:851.500px;width:0;height:0;border-left:4.500px solid transparent;border-right:4.500px solid transparent;border-top:5px solid #505050"></div>
<div class="a" style="left:38.800px;top:779.300px;width:52.500px;height:52.500px;border-radius:50%;background:#fff;box-shadow:0 1px 4px rgba(0,0,0,.45)"></div>
<div class="a" style="left:38px;top:778px"><svg width="54" height="56" viewBox="0 0 54 56"><defs><radialGradient id="mg" cx="30" cy="19" r="34" gradientUnits="userSpaceOnUse"><stop offset="0" stop-color="#00a5d8"/><stop offset=".45" stop-color="#0078b6"/><stop offset="1" stop-color="#005a96"/></radialGradient></defs><path d="M34.300 1.700C32.500 5.500 28 11.500 21.800 16.200 16 20.600 8.500 25.500 4.900 30.600 3.200 34 3.600 40 8.100 44.300 13 49.500 20 54 28.200 53.600 35 53.300 41 51 44.500 47 48.500 42.500 50.200 36 49.600 30 48.800 22 42 12 34.300 1.700z" fill="url(#mg)"/><text x="28.200" y="34" font-family="Liberation Sans,Arial,sans-serif" font-size="13.500" fill="#fff" text-anchor="middle" textLength="30.500" lengthAdjust="spacingAndGlyphs">magic</text></svg></div>
<div class="a" style="left:74.200px;top:777.200px;width:18.600px;height:18.600px;border-radius:50%;background:#cb0000;color:#fff;font-weight:bold;font-size:11px;line-height:18.600px;text-align:center;letter-spacing:.8px;text-indent:.8px">71</div>
<div class="a" id="spl1"></div>
<div class="a" id="ftab"><svg class="a" style="left:9.500px;top:8px" width="11" height="13" viewBox="0 0 11 13"><path d="M.6.600h6l3.800 3.800v8H.600z" fill="#fff" stroke="#8a8a8a" stroke-width="1"/><path d="M6.400.800v3.800h3.800" fill="none" stroke="#8a8a8a" stroke-width=".9"/><path d="M2.600 6.600h5.800M2.600 8.600h5.800M2.600 10.500h5.800" stroke="#9a9a9a" stroke-width=".8"/></svg><span>MContact</span><i>*</i>
<svg class="a" style="left:93.500px;top:9px" width="12" height="12" viewBox="0 0 14 14"><path d="M12.200 5.400A5.600 5.600 0 0 0 2.300 4.100" fill="none" stroke="#c9c9c9" stroke-width="1.800"/><path d="M1.800 8.600a5.600 5.600 0 0 0 9.900 1.300" fill="none" stroke="#c9c9c9" stroke-width="1.800"/><path d="M13.400 1.200v5h-5zM.6 12.800v-5h5z" fill="#c9c9c9"/></svg>
<svg class="a" style="left:110.500px;top:10.500px" width="9" height="9" viewBox="0 0 9 9"><path d="M1.300 1.300l6.400 6.400M7.700 1.300L1.300 7.700" stroke="#c4c4c4" stroke-width="2.200" stroke-linecap="butt"/></svg></div>
<div class="a tb" style="left:1662px;width:47px"></div>
<div class="a tb" style="left:1708px;width:48px"></div>
<!-- code icon -->
<svg class="a" style="left:1676.500px;top:15.500px" width="19" height="15" viewBox="0 0 19 15"><path d="M5.800 2.800L1.400 7.500l4.400 4.700M13.200 2.800l4.400 4.700-4.400 4.700M11.200 1.200L7.800 13.800" fill="none" stroke="#fff" stroke-width="1.700"/></svg>
<!-- expand arrows -->
<svg class="a" style="left:1727px;top:17.300px" width="11.600" height="11.600" viewBox="0 0 13 13"><path d="M0 0h4.600L3.200 1.400l3.300 3.300 3.300-3.300L8.400 0H13v4.600l-1.400-1.400-3.300 3.300 3.300 3.300L13 8.400V13H8.400l1.400-1.400-3.300-3.300-3.300 3.300L4.600 13H0V8.400l1.400 1.400 3.300-3.300-3.300-3.300L0 4.600z" fill="#fff"/></svg>
<div class="a" style="left:1771.500px;top:14.500px"><svg width="17" height="16" viewBox="0 0 17 16"><path d="M9.58 6.20 L11.14 6.41 L11.14 7.99 L9.58 8.20 L9.12 9.31 L10.08 10.56 L8.96 11.68 L7.71 10.72 L6.60 11.18 L6.39 12.74 L4.81 12.74 L4.60 11.18 L3.49 10.72 L2.24 11.68 L1.12 10.56 L2.08 9.31 L1.62 8.20 L0.06 7.99 L0.06 6.41 L1.62 6.20 L2.08 5.09 L1.12 3.84 L2.24 2.72 L3.49 3.68 L4.60 3.22 L4.81 1.66 L6.39 1.66 L6.60 3.22 L7.71 3.68 L8.96 2.72 L10.08 3.84 L9.12 5.09Z M7.50 7.20 A1.9 1.9 0 1 0 3.70 7.20 A1.9 1.9 0 1 0 7.50 7.20Z" fill="#fff" fill-rule="evenodd"/><path d="M14.87 2.83 L15.94 2.96 L15.94 4.24 L14.87 4.37 L14.40 5.18 L14.82 6.17 L13.72 6.81 L13.07 5.95 L12.13 5.95 L11.48 6.81 L10.38 6.17 L10.80 5.18 L10.33 4.37 L9.26 4.24 L9.26 2.96 L10.33 2.83 L10.80 2.02 L10.38 1.03 L11.48 0.39 L12.13 1.25 L13.07 1.25 L13.72 0.39 L14.82 1.03 L14.40 2.02Z M13.70 3.60 A1.1 1.1 0 1 0 11.50 3.60 A1.1 1.1 0 1 0 13.70 3.60Z" fill="#fff" fill-rule="evenodd"/><path d="M14.87 10.83 L15.94 10.96 L15.94 12.24 L14.87 12.37 L14.40 13.18 L14.82 14.17 L13.72 14.81 L13.07 13.95 L12.13 13.95 L11.48 14.81 L10.38 14.17 L10.80 13.18 L10.33 12.37 L9.26 12.24 L9.26 10.96 L10.33 10.83 L10.80 10.02 L10.38 9.03 L11.48 8.39 L12.13 9.25 L13.07 9.25 L13.72 8.39 L14.82 9.03 L14.40 10.02Z M13.70 11.60 A1.1 1.1 0 1 0 11.50 11.60 A1.1 1.1 0 1 0 13.70 11.60Z" fill="#fff" fill-rule="evenodd"/></svg></div>
<!-- desktop -->
<svg class="a" style="left:1819.300px;top:16.200px" width="15" height="13" viewBox="0 0 16 14"><rect x=".8" y=".8" width="14.400" height="9.400" rx="1.200" fill="none" stroke="#fff" stroke-width="1.800"/><path d="M5.500 11.200h5l.6 1.800H4.900z" fill="#fff"/><path d="M4.200 13.300h7.600" stroke="#fff" stroke-width="1.200"/></svg>
<div class="a" style="left:1850px;top:1px;width:1px;height:47px;background:#eef4f6"></div>
<div class="a" id="save">Save</div>
<div class="a" style="left:1918px;top:1px;width:2px;height:46px;background:#f4f4f4"></div>
<div class="a" id="cv"></div>
<div class="a st" style="left:384px;top:64px;width:1201.500px;height:521px"></div>
<div class="a" id="rh"></div><div class="a" style="left:368px;top:47px;width:1217.500px;height:1px;background:#c4c4c4"></div><div class="a" style="left:384px;top:47px;width:1px;height:17px;background:#bdbdbd"></div><div class="a" id="rv"></div>
<svg class="a" style="left:368px;top:47px" width="1218" height="538" viewBox="0 0 1218 538"><path d="M16.0 3.5V17.5M109.7 3.5V17.5M203.4 3.5V17.5M297.1 3.5V17.5M390.8 3.5V17.5M484.5 3.5V17.5M578.2 3.5V17.5M671.9 3.5V17.5M765.6 3.5V17.5M859.3 3.5V17.5M953.0 3.5V17.5M1046.7 3.5V17.5M1140.4 3.5V17.5M2.5 17.5H16.5M2.5 111.2H16.5M2.5 204.9H16.5M2.5 298.6H16.5M2.5 392.3H16.5M2.5 486.0H16.5" stroke="#a8a8a8" stroke-width="1"/><path d="M62.8 9V17.5M156.5 9V17.5M250.2 9V17.5M343.9 9V17.5M437.6 9V17.5M531.3 9V17.5M625.0 9V17.5M718.7 9V17.5M812.4 9V17.5M906.1 9V17.5M999.8 9V17.5M1093.5 9V17.5M1187.2 9V17.5M8 64.3H16.5M8 158.0H16.5M8 251.7H16.5M8 345.4H16.5M8 439.1H16.5M8 532.8H16.5" stroke="#b4b4b4" stroke-width="1"/><path d="M25.4 13.5V17.5M34.7 13.5V17.5M44.1 13.5V17.5M53.5 13.5V17.5M72.2 13.5V17.5M81.6 13.5V17.5M91.0 13.5V17.5M100.3 13.5V17.5M119.1 13.5V17.5M128.4 13.5V17.5M137.8 13.5V17.5M147.2 13.5V17.5M165.9 13.5V17.5M175.3 13.5V17.5M184.7 13.5V17.5M194.0 13.5V17.5M212.8 13.5V17.5M222.1 13.5V17.5M231.5 13.5V17.5M240.9 13.5V17.5M259.6 13.5V17.5M269.0 13.5V17.5M278.4 13.5V17.5M287.7 13.5V17.5M306.5 13.5V17.5M315.8 13.5V17.5M325.2 13.5V17.5M334.6 13.5V17.5M353.3 13.5V17.5M362.7 13.5V17.5M372.1 13.5V17.5M381.4 13.5V17.5M400.2 13.5V17.5M409.5 13.5V17.5M418.9 13.5V17.5M428.3 13.5V17.5M447.0 13.5V17.5M456.4 13.5V17.5M465.8 13.5V17.5M475.1 13.5V17.5M493.9 13.5V17.5M503.2 13.5V17.5M512.6 13.5V17.5M522.0 13.5V17.5M540.7 13.5V17.5M550.1 13.5V17.5M559.5 13.5V17.5M568.8 13.5V17.5M587.6 13.5V17.5M596.9 13.5V17.5M606.3 13.5V17.5M615.7 13.5V17.5M634.4 13.5V17.5M643.8 13.5V17.5M653.2 13.5V17.5M662.5 13.5V17.5M681.3 13.5V17.5M690.6 13.5V17.5M700.0 13.5V17.5M709.4 13.5V17.5M728.1 13.5V17.5M737.5 13.5V17.5M746.9 13.5V17.5M756.2 13.5V17.5M775.0 13.5V17.5M784.3 13.5V17.5M793.7 13.5V17.5M803.1 13.5V17.5M821.8 13.5V17.5M831.2 13.5V17.5M840.6 13.5V17.5M849.9 13.5V17.5M868.7 13.5V17.5M878.0 13.5V17.5M887.4 13.5V17.5M896.8 13.5V17.5M915.5 13.5V17.5M924.9 13.5V17.5M934.3 13.5V17.5M943.6 13.5V17.5M962.4 13.5V17.5M971.7 13.5V17.5M981.1 13.5V17.5M990.5 13.5V17.5M1009.2 13.5V17.5M1018.6 13.5V17.5M1028.0 13.5V17.5M1037.3 13.5V17.5M1056.1 13.5V17.5M1065.4 13.5V17.5M1074.8 13.5V17.5M1084.2 13.5V17.5M1102.9 13.5V17.5M1112.3 13.5V17.5M1121.7 13.5V17.5M1131.0 13.5V17.5M1149.8 13.5V17.5M1159.1 13.5V17.5M1168.5 13.5V17.5M1177.9 13.5V17.5M1196.6 13.5V17.5M1206.0 13.5V17.5M1215.4 13.5V17.5M12.5 26.9H16.5M12.5 36.2H16.5M12.5 45.6H16.5M12.5 55.0H16.5M12.5 73.7H16.5M12.5 83.1H16.5M12.5 92.5H16.5M12.5 101.8H16.5M12.5 120.6H16.5M12.5 129.9H16.5M12.5 139.3H16.5M12.5 148.7H16.5M12.5 167.4H16.5M12.5 176.8H16.5M12.5 186.2H16.5M12.5 195.5H16.5M12.5 214.3H16.5M12.5 223.6H16.5M12.5 233.0H16.5M12.5 242.4H16.5M12.5 261.1H16.5M12.5 270.5H16.5M12.5 279.9H16.5M12.5 289.2H16.5M12.5 308.0H16.5M12.5 317.3H16.5M12.5 326.7H16.5M12.5 336.1H16.5M12.5 354.8H16.5M12.5 364.2H16.5M12.5 373.6H16.5M12.5 382.9H16.5M12.5 401.7H16.5M12.5 411.0H16.5M12.5 420.4H16.5M12.5 429.8H16.5M12.5 448.5H16.5M12.5 457.9H16.5M12.5 467.3H16.5M12.5 476.6H16.5M12.5 495.4H16.5M12.5 504.7H16.5M12.5 514.1H16.5M12.5 523.5H16.5" stroke="#c2c2c2" stroke-width="1"/></svg>
<!-- XPA -->
<div class="a d" style="left:384px;top:64px;width:1201.500px;height:521px;border-bottom:none"></div>
<div class="a lb" style="left:385px;top:65.500px">XPA Component Container</div>
<!-- Container -->
<div class="a d" style="left:450.500px;top:79.500px;width:1068px;height:496.500px"></div>
<div class="a lb" style="left:452px;top:81px">Container</div>
<!-- Row 1 -->
<div class="a d st" style="left:442.500px;top:94px;width:1084px;height:95px"></div>
<div class="a lb" style="left:444px;top:95.500px">Row</div>
<div class="a d" style="left:445.500px;top:109px;width:1078.500px;height:63.500px"></div>
<div class="a lb" style="left:447px;top:110.500px">Column</div>
<!-- Add button -->
<div class="a" style="left:1441px;top:124.500px;width:80px;height:33.500px;background:#3f51b5;border-radius:4px;box-shadow:0 2px 2px rgba(0,0,0,.22),0 1px 4px rgba(0,0,0,.18)"></div>
<svg class="a" style="left:1459px;top:131.500px" width="16" height="16" viewBox="0 0 16 16"><circle cx="8" cy="8" r="6.700" fill="none" stroke="#fff" stroke-width="1.500"/><path d="M8 4.600v6.800M4.600 8h6.800" stroke="#fff" stroke-width="1.500"/></svg>
<div class="a" style="left:1482.500px;top:132px;color:#fff;font-weight:bold;font-size:13.500px;line-height:16px;letter-spacing:-.2px">Add</div>
<!-- Row 2 -->
<div class="a d st" style="left:442.500px;top:208px;width:1084px;height:352px"></div>
<div class="a lb" style="left:444px;top:209.500px">Row</div>
<div class="a d" style="left:445.500px;top:223px;width:1078.500px;height:321px"></div>
<div class="a lb" style="left:447px;top:224.500px">Column</div>
<div class="a d" style="left:448px;top:238px;width:1073.500px;height:290px"></div>
<div class="a lb" style="left:449.500px;top:239.500px">Div</div>
<div class="a d" style="left:451px;top:253px;width:1067px;height:174.500px"></div>
<div class="a lb" style="left:452.500px;top:254.500px">Table</div>
<!-- table header -->
<div class="a" style="left:452.500px;top:267.500px;width:1062.500px;height:29px;background:#f8f9fb;border-bottom:1px solid #dcdcdc"></div>
<div class="a th" style="left:553px;width:119px">Type</div>
<div class="a th" style="left:871.500px;width:119px">Value</div>
<div class="a th" style="left:1189.500px;width:119px">isPrimary</div>
<div class="a th" style="left:1402px;width:119px">Action</div>
<!-- cells -->
<div class="a d" style="left:458px;top:296.500px;width:308.500px;height:56.500px"></div>
<div class="a d" style="left:776.500px;top:296.500px;width:309.500px;height:56.500px"></div>
<div class="a d" style="left:1095px;top:296.500px;width:309.500px;height:56.500px"></div>
<div class="a d" style="left:1413.500px;top:296.500px;width:97px;height:56.500px"></div>
<div class="a lb lb2" style="left:459.500px;top:298px">Container</div>
<div class="a lb lb2" style="left:778px;top:298px">Container</div>
<div class="a lb lb2" style="left:1096.500px;top:298px">Container</div>
<div class="a td" style="left:553px;width:119px">Personal</div>
<div class="a td" style="left:871.500px;width:119px;letter-spacing:.25px">9998887744</div>
<div class="a td" style="left:1189.500px;width:119px">false</div>
<!-- delete button + selection overlay -->
<div class="a" style="left:1448px;top:298.500px;width:27.500px;height:26.500px;border-radius:3px;background:linear-gradient(90deg,#e0404c 0,#dc3545 55%,#c41f2f 100%)"></div>
<div class="a" style="left:1458.500px;top:305.500px;width:7px;height:8px;border:1px solid #f6d6d8"></div>
<div class="a" style="left:1438px;top:298px;width:27.500px;height:27px;background:rgba(165,165,168,.42);border:1px dashed #666"></div>
<div class="a lb lb2" style="left:1415px;top:298px">Container</div>
<!-- rows -->
<div class="a" style="left:452.500px;top:354px;width:1062.500px;height:29.500px;background:#f4f4f4;border-top:1px solid #cfcfcf;border-bottom:1px solid #cfcfcf"></div>
<div class="a" style="left:452.500px;top:412px;width:1062.500px;height:1px;background:#cfcfcf"></div>
<!-- Paginator -->
<div class="a d" style="left:451px;top:428px;width:1067px;height:83.500px"></div>
<div class="a lb" style="left:452.500px;top:429.800px">Paginator</div>
<div class="a" style="left:1194px;top:465px;font-size:11.200px;line-height:14px;color:#808080;letter-spacing:.05px">Items per page:</div>
<div class="a" style="left:1279.500px;top:459.500px;width:42px;height:24px;border:1px solid #cfcfd4;border-radius:4px"></div>
<div class="a" style="left:1285px;top:465px;font-size:11.500px;line-height:14px;color:#444">10</div>
<div class="a" style="left:1303.500px;top:469.500px;width:0;height:0;border-left:4px solid transparent;border-right:4px solid transparent;border-top:4.500px solid #555"></div>
<div class="a" style="left:1355px;top:463px;font-size:11.500px;line-height:14px;color:#757575;letter-spacing:-.1px">1 – 3 of 3</div>
<svg class="a" style="left:1446px;top:464.500px" width="10" height="13" viewBox="0 0 10 13"><path d="M8 1.200L2.200 6.500 8 11.800" fill="none" stroke="#9a9a9a" stroke-width="1.500"/></svg>
<svg class="a" style="left:1483px;top:464.500px" width="10" height="13" viewBox="0 0 10 13"><path d="M2 1.200l5.800 5.300L2 11.800" fill="none" stroke="#9a9a9a" stroke-width="1.500"/></svg>
<!-- canvas bottom -->
<div class="a" style="left:368px;top:585px;width:1217.500px;height:1.500px;background:#a9a9a9"></div>
<div class="a" id="spl2"></div>
<div class="a" id="bt"></div>
<div class="a tab on" style="left:371.500px;width:106.500px"><svg class="a" style="left:9.500px;top:5.500px" width="19" height="14" viewBox="0 0 19 15"><path d="M5.800 2.800L1.400 7.500l4.400 4.700M13.200 2.800l4.400 4.700-4.400 4.700M11.200 1.200L7.800 13.800" fill="none" stroke="#fff" stroke-width="1.600"/></svg><span style="left:43.500px">Template</span></div>
<div class="a tab" style="left:483px;width:118.500px"><div class="a" style="left:9.500px;top:4px"><svg width="15" height="15" viewBox="0 0 15 15"><path d="M12.84 6.16 L14.93 6.44 L14.93 8.56 L12.84 8.84 L12.22 10.33 L13.50 12.00 L12.00 13.50 L10.33 12.22 L8.84 12.84 L8.56 14.93 L6.44 14.93 L6.16 12.84 L4.67 12.22 L3.00 13.50 L1.50 12.00 L2.78 10.33 L2.16 8.84 L0.07 8.56 L0.07 6.44 L2.16 6.16 L2.78 4.67 L1.50 3.00 L3.00 1.50 L4.67 2.78 L6.16 2.16 L6.44 0.07 L8.56 0.07 L8.84 2.16 L10.33 2.78 L12.00 1.50 L13.50 3.00 L12.22 4.67Z M10.00 7.50 A2.5 2.5 0 1 0 5.00 7.50 A2.5 2.5 0 1 0 10.00 7.50Z" fill="#777" fill-rule="evenodd"/></svg></div><span style="left:39.500px">Component</span></div>
<div class="a tab" style="left:605.500px;width:116px"><svg class="a" style="left:10px;top:5.500px" width="19" height="14" viewBox="0 0 19 14"><rect x=".7" y=".7" width="17.600" height="12.600" rx="1.200" fill="none" stroke="#777" stroke-width="1.400"/><circle cx="4.800" cy="4.600" r="1.700" fill="#777"/><path d="M2.600 11.400V9.600l3-3 2.200 2.200 4.400-4.600 4.200 4.200v3z" fill="#777"/></svg><span style="left:43px">Styles</span><svg class="a" style="left:91.500px;top:5px" width="15" height="15" viewBox="0 0 14 14"><path d="M12.200 5.400A5.600 5.600 0 0 0 2.300 4.100" fill="none" stroke="#8a8a8a" stroke-width="2"/><path d="M1.800 8.600a5.600 5.600 0 0 0 9.900 1.300" fill="none" stroke="#8a8a8a" stroke-width="2"/><path d="M13.400 1.200v5h-5zM.6 12.800v-5h5z" fill="#8a8a8a"/></svg></div>
<div class="a tab" style="left:1426.500px;width:150px"><svg class="a" style="left:10.500px;top:4px" width="9" height="16" viewBox="0 0 9 16"><path d="M2 .5h3.600L4.400 5.400l4-.9L3.600 15.500h-.8L4.400 8.200l-3.900.9z" fill="#808080"/></svg><span style="left:36.500px">Live Preview Logs</span></div>
<div class="a" id="bl"></div>
<div class="a" id="ed">
<div class="l" style="top:-7.58px"><span class="n">50</span><i class="g" style="left:79.9px"></i><i class="g" style="left:108.7px"></i><i class="g" style="left:137.5px"></i><i class="g" style="left:166.3px"></i><i class="g" style="left:195.1px"></i><i class="g" style="left:223.9px"></i><span class="c">                            <span class="p">&lt;/</span><span class="t">mat-cell</span><span class="p">&gt;</span></span></div>
<div class="l" style="top:10.14px"><span class="n">51</span><i class="g" style="left:79.9px"></i><i class="g" style="left:108.7px"></i><i class="g" style="left:137.5px"></i><i class="g" style="left:166.3px"></i><i class="g" style="left:195.1px"></i><span class="c">                        <span class="p">&lt;/</span><span class="t">ng-container</span><span class="p">&gt;</span></span></div>
<div class="l" style="top:27.86px"><span class="n">52</span><i class="g" style="left:79.9px"></i><i class="g" style="left:108.7px"></i><i class="g" style="left:137.5px"></i><i class="g" style="left:166.3px"></i><i class="g" style="left:195.1px"></i><span class="c">                        <span class="p">&lt;</span><span class="t">ng-container</span> [<span class="k">magic</span>]=<span class="v">&quot;mgc.ColumnAction&quot;</span> [<span class="k">matColumnDef</span>]=<span class="v">&quot;mgc.ColumnAction&quot;</span> <span class="k">data-comp-id</span>=<span class="v">&quot;table-column.4&quot;</span><span class="p">&gt;</span></span></div>
<div class="l" style="top:45.58px"><span class="n">53</span><i class="g" style="left:79.9px"></i><i class="g" style="left:108.7px"></i><i class="g" style="left:137.5px"></i><i class="g" style="left:166.3px"></i><i class="g" style="left:195.1px"></i><i class="g" style="left:223.9px"></i><span class="c">                            <span class="p">&lt;</span><span class="t">mat-header-cell</span> *<span class="k">matHeaderCellDef</span> <span class="k">class</span>=<span class="v">&quot;text-center table-col-sm&quot;</span> <span class="k">data-comp-id</span>=<span class="v">&quot;table-header-cell.4&quot;</span><span class="p">&gt;</span></span></div>
<div class="l" style="top:63.30px"><span class="n">54</span><i class="g" style="left:79.9px"></i><i class="g" style="left:108.7px"></i><i class="g" style="left:137.5px"></i><i class="g" style="left:166.3px"></i><i class="g" style="left:195.1px"></i><i class="g" style="left:223.9px"></i><i class="g" style="left:252.7px"></i><span class="c">                                {{ mg.getText(mgc.ColumnAction) }}</span></div>
<div class="l" style="top:81.02px"><span class="n">55</span><i class="g" style="left:79.9px"></i><i class="g" style="left:108.7px"></i><i class="g" style="left:137.5px"></i><i class="g" style="left:166.3px"></i><i class="g" style="left:195.1px"></i><i class="g" style="left:223.9px"></i><span class="c">                            <span class="p">&lt;/</span><span class="t">mat-header-cell</span><span class="p">&gt;</span></span></div>
<div class="l" style="top:98.74px"><span class="n">56</span><i class="g" style="left:79.9px"></i><i class="g" style="left:108.7px"></i><i class="g" style="left:137.5px"></i><i class="g" style="left:166.3px"></i><i class="g" style="left:195.1px"></i><i class="g" style="left:223.9px"></i><span class="c">                            <span class="p">&lt;</span><span class="t">mat-cell</span> *<span class="k">matCellDef</span>=<span class="v">&quot;let row&quot;</span> <span class="k">magicMark</span>=<span class="v">&quot;magicTableRowContainer&quot;</span> <span class="k">class</span>=<span class="v">&quot;text-center table-col-sm&quot;</span> <span class="k">data-comp-id</span>=<span class="v">&quot;column-cell.4&quot;</span><span class="p">&gt;</span></span></div>
<div class="l" style="top:116.46px"><span class="n">57</span><i class="g" style="left:79.9px"></i><i class="g" style="left:108.7px"></i><i class="g" style="left:137.5px"></i><i class="g" style="left:166.3px"></i><i class="g" style="left:195.1px"></i><i class="g" style="left:223.9px"></i><i class="g" style="left:252.7px"></i><span class="c">                                <span class="p">&lt;</span><span class="t">c-container</span> #<span class="k">matCell</span> [<span class="k">formGroup</span>]=<span class="v">&quot;mg.getFormGroupByRow(row.rowId)&quot;</span> *<span class="k">ngIf</span>=<span class="v">&quot;mg.ifRowCreated(row)&quot;</span> <span class="k">data-comp-id</span>=<span class="v">&quot;c-container.5&quot;</span><span class="p">&gt;</span></span></div>
<div class="l" style="top:134.18px"><span class="n">58</span><i class="g" style="left:79.9px"></i><i class="g" style="left:108.7px"></i><i class="g" style="left:137.5px"></i><i class="g" style="left:166.3px"></i><i class="g" style="left:195.1px"></i><i class="g" style="left:223.9px"></i><i class="g" style="left:252.7px"></i><i class="g" style="left:281.5px"></i><span class="c">                                    <span class="p">&lt;</span><span class="t">button</span> [<span class="k">magic</span>]=<span class="v">&quot;mgc.btnDelete&quot;</span> <span class="k">data-comp-id</span>=<span class="v">&quot;button.2&quot;</span> <span class="k">class</span>=<span class="v">&quot;deletebtn&quot;</span> [<span class="k">rowId</span>]=<span class="v">&quot;row.rowId&quot;</span><span class="p">&gt;</span>Button<span class="p">&lt;/</span><span class="t">button</span><span class="p">&gt;</span></span></div>
<div class="l" style="top:151.90px"><span class="n">59</span><i class="g" style="left:79.9px"></i><i class="g" style="left:108.7px"></i><i class="g" style="left:137.5px"></i><i class="g" style="left:166.3px"></i><i class="g" style="left:195.1px"></i><i class="g" style="left:223.9px"></i><i class="g" style="left:252.7px"></i><span class="c">                                <span class="p">&lt;/</span><span class="t">c-container</span><span class="p">&gt;</span></span></div>
<div class="l" style="top:169.62px"><span class="n">60</span><i class="g" style="left:79.9px"></i><i class="g" style="left:108.7px"></i><i class="g" style="left:137.5px"></i><i class="g" style="left:166.3px"></i><i class="g" style="left:195.1px"></i><i class="g" style="left:223.9px"></i><span class="c">                            <span class="p">&lt;/</span><span class="t">mat-cell</span><span class="p">&gt;</span></span></div>
<div class="l" style="top:187.34px"><span class="n">61</span><i class="g" style="left:79.9px"></i><i class="g" style="left:108.7px"></i><i class="g" style="left:137.5px"></i><i class="g" style="left:166.3px"></i><i class="g" style="left:195.1px"></i><span class="c">                        <span class="p">&lt;/</span><span class="t">ng-container</span><span class="p">&gt;</span></span></div>
<div class="l" style="top:205.06px"><span class="n">62</span><i class="g" style="left:79.9px"></i><i class="g" style="left:108.7px"></i><i class="g" style="left:137.5px"></i><i class="g" style="left:166.3px"></i><span class="c">                    <span class="p">&lt;/</span><span class="t">mat-table</span><span class="p">&gt;</span></span></div>
<div class="l" style="top:222.78px"><span class="n">63</span><i class="g" style="left:79.9px"></i><i class="g" style="left:108.7px"></i><i class="g" style="left:137.5px"></i><i class="g" style="left:166.3px"></i><span class="c">                    <span class="p">&lt;</span><span class="t">mat-paginator</span> #<span class="k">paginator</span> [<span class="k">pageSize</span>]=<span class="v">&quot;10&quot;</span> [<span class="k">pageSizeOptions</span>]=<span class="v">&quot;[5, 10, 20]&quot;</span> (<span class="k">page</span>)=<span class="v">&quot;tableService.mgOnPaginateChange($event)&quot;</span> <span class="k">data-comp-id</span>=<span class="v">&quot;mat-paginator.1&quot;</span><span class="p">&gt;</span></span></div>
<div class="l" style="top:240.50px"><span class="n">64</span><i class="g" style="left:79.9px"></i><i class="g" style="left:108.7px"></i><i class="g" style="left:137.5px"></i><span class="c">                <span class="p">&lt;/</span><span class="t">div</span><span class="p">&gt;</span></span></div>
</div>
<!-- editor scrollbars -->
<div class="a" style="left:1580.500px;top:622px;width:1px;height:247px;background:#e4e4e4"></div>
<div class="a" style="left:1581px;top:622px;width:4.500px;height:247px;background:#fff"></div>
<div class="a" style="left:1581px;top:775px;width:4.500px;height:43px;background:#c1c1c1"></div>
<div class="a" style="left:425.500px;top:864px;width:963px;height:4px;background:rgba(170,170,170,.62)"></div>
<div class="a" id="rp"></div>
<div class="a rt" style="left:1596.200px;width:88.500px"><svg class="a" style="left:9px;top:3.500px" width="15" height="17" viewBox="0 0 15 17"><g fill="#777"><ellipse cx="7.500" cy="3" rx="7.300" ry="2.800"/><path d="M.2 4.800c1 1.500 4 2.200 7.300 2.200s6.300-.7 7.300-2.200v2.600c0 1.500-3.300 2.800-7.300 2.800S.2 8.900.2 7.400z"/><path d="M.2 9.200c1 1.500 4 2.200 7.300 2.200s6.300-.7 7.300-2.200v2.600c0 1.500-3.300 2.800-7.300 2.800S.2 13.300.2 11.800z"/><path d="M.2 13.600c1 1.300 4 2 7.300 2s6.300-.7 7.300-2v.6c0 1.500-3.300 2.800-7.300 2.800S.2 15.700.2 14.200z"/></g></svg><span style="left:39px;width:39.500px">Models</span></div>
<div class="a rt" style="left:1690.200px;width:91.500px"><svg class="a" style="left:10px;top:4.500px" width="17" height="15" viewBox="0 0 17 15"><g fill="#777"><rect x="6" y="0" width="5" height="4.400" rx=".6"/><rect x="0" y="10.400" width="4.800" height="4.400" rx=".6"/><rect x="6.100" y="10.400" width="4.800" height="4.400" rx=".6"/><rect x="12.200" y="10.400" width="4.800" height="4.400" rx=".6"/></g><path d="M8.500 4v6.600M2.400 10.600V7.400h12.200v3.200" fill="none" stroke="#777" stroke-width="1.100"/></svg><span style="left:42px;width:38.500px">Outline</span></div>
<div class="a rt on" style="left:1786.200px;width:134px"><svg class="a" style="left:9.500px;top:4.500px" width="18" height="15" viewBox="0 0 18 15"><path d="M0 1.500h2.600M4.200 1.500H18M0 5.500h2.600M4.200 5.500H18M0 9.500h2.600M4.200 9.500H18M0 13.500h2.600M4.200 13.500H18" stroke="#fff" stroke-width="2.200"/></svg><span style="left:42px;width:79.300px">PropertySheet</span></div>
<div class="a" id="rbl"></div>
<div class="a" id="rh1"></div>
<div class="a" style="left:1600.500px;top:88px;font-size:13.100px;line-height:18px;color:#111">Button</div>
<svg class="a" style="left:1898px;top:90.500px" width="12" height="13" viewBox="0 0 12 13"><path d="M4 1.800V.600h4v1.200M.6 2.400h10.800M1.800 2.600l.6 9.800h7.200l.6-9.800" fill="#d7ecfa" stroke="#0b8fd6" stroke-width="1.200"/><path d="M4.200 4.600v6M6 4.600v6M7.800 4.600v6" stroke="#0b8fd6" stroke-width="1"/></svg>
<!-- Events & Data -->
<div class="a rs" style="top:112px"><i class="tri"></i><b>Events &amp; Data</b></div>
<div class="a pl" style="left:1591px;width:100.500px;top:143px">Data Mapping</div>
<div class="a in" style="left:1699px;top:140.300px;width:195px">mgc.btnDelete</div>
<div class="a gb" style="left:1893.500px;top:140.300px"><svg width="13" height="13" viewBox="0 0 13 13"><path d="M11.32 5.17 L12.81 5.46 L12.81 7.54 L11.32 7.83 L10.85 8.97 L11.70 10.23 L10.23 11.70 L8.97 10.85 L7.83 11.32 L7.54 12.81 L5.46 12.81 L5.17 11.32 L4.03 10.85 L2.77 11.70 L1.30 10.23 L2.15 8.97 L1.68 7.83 L0.19 7.54 L0.19 5.46 L1.68 5.17 L2.15 4.03 L1.30 2.77 L2.77 1.30 L4.03 2.15 L5.17 1.68 L5.46 0.19 L7.54 0.19 L7.83 1.68 L8.97 2.15 L10.23 1.30 L11.70 2.77 L10.85 4.03Z M8.90 6.50 A2.4 2.4 0 1 0 4.10 6.50 A2.4 2.4 0 1 0 8.90 6.50Z" fill="#111" fill-rule="evenodd"/></svg></div>
<div class="a pl" style="left:1591px;width:100.500px;top:165px">Id</div>
<div class="a in" style="left:1699px;top:162.600px;width:213px"></div>
<div class="a pl" style="left:1591px;width:100.500px;top:187.500px">Non Magic Control</div>
<div class="a" style="left:1699px;top:187px;width:15px;height:15px;border:1px solid #8a8a8a;border-radius:2.500px;background:#fff"></div>
<!-- box1 content -->
<div class="a" style="left:1573px;top:192px;width:347px;height:92.500px;overflow:hidden">
 <div class="a" style="left:0;top:0;width:347px;height:93px;background:#f4f4f4"></div>
 <div class="a st" style="left:0;top:0;width:12px;height:93px"></div>
 <div class="a" style="left:12px;top:0;width:5.800px;height:93px;background:linear-gradient(90deg,#b9b9b9 0,#b9b9b9 .8px,#d8d8d8 .8px,#d8d8d8 4.700px,#b8b8b8 4.700px,#b8b8b8 5.800px)"></div>
 <div class="a rs" style="left:17.500px;top:20.400px"><i class="tri"></i><b>Table Actions</b></div>
 <div class="a pl" style="left:25.500px;top:51px;text-align:left;font-size:11.100px">Is Inside Table</div>
 <div class="a" style="left:104.500px;top:50px;width:15px;height:15px;border-radius:2.500px;background:#0b6cf5"><svg width="15" height="15" viewBox="0 0 15 15"><path d="M3.400 7.800l2.800 2.800 5.400-6.200" fill="none" stroke="#fff" stroke-width="2"/></svg></div>
 <div class="a rs" style="left:17.500px;top:76.500px"><i class="tri"></i><b>Display Logic</b></div>
 <div class="a yb" style="left:0;top:0;width:357px;height:92.500px"></div>
</div>
<!-- display logic fields -->
<div class="a pl" style="left:1591px;width:70px;top:298.500px">Button Style</div>
<div class="a in" style="left:1668px;top:296.400px;width:244px;line-height:16.400px">Default</div><i class="a car" style="left:1900.500px;top:304.500px"></i>
<div class="a pl" style="left:1591px;width:70px;top:320.500px">Button Color</div>
<div class="a in" style="left:1668px;top:318.300px;width:244px;line-height:16.400px">Default</div><i class="a car" style="left:1900.500px;top:326.500px"></i>
<div class="a pl" style="left:1591px;width:70px;top:343.500px">Is Visible</div>
<div class="a in" style="left:1668px;top:341.400px;width:226px"></div><div class="a gb" style="left:1893.500px;top:341.400px"><svg width="13" height="13" viewBox="0 0 13 13"><path d="M11.32 5.17 L12.81 5.46 L12.81 7.54 L11.32 7.83 L10.85 8.97 L11.70 10.23 L10.23 11.70 L8.97 10.85 L7.83 11.32 L7.54 12.81 L5.46 12.81 L5.17 11.32 L4.03 10.85 L2.77 11.70 L1.30 10.23 L2.15 8.97 L1.68 7.83 L0.19 7.54 L0.19 5.46 L1.68 5.17 L2.15 4.03 L1.30 2.77 L2.77 1.30 L4.03 2.15 L5.17 1.68 L5.46 0.19 L7.54 0.19 L7.83 1.68 L8.97 2.15 L10.23 1.30 L11.70 2.77 L10.85 4.03Z M8.90 6.50 A2.4 2.4 0 1 0 4.10 6.50 A2.4 2.4 0 1 0 8.90 6.50Z" fill="#111" fill-rule="evenodd"/></svg></div>
<div class="a pl" style="left:1591px;width:70px;top:365.500px">Display If</div>
<div class="a in" style="left:1668px;top:363.500px;width:226px"></div><div class="a gb" style="left:1893.500px;top:363.500px"><svg width="13" height="13" viewBox="0 0 13 13"><path d="M11.32 5.17 L12.81 5.46 L12.81 7.54 L11.32 7.83 L10.85 8.97 L11.70 10.23 L10.23 11.70 L8.97 10.85 L7.83 11.32 L7.54 12.81 L5.46 12.81 L5.17 11.32 L4.03 10.85 L2.77 11.70 L1.30 10.23 L2.15 8.97 L1.68 7.83 L0.19 7.54 L0.19 5.46 L1.68 5.17 L2.15 4.03 L1.30 2.77 L2.77 1.30 L4.03 2.15 L5.17 1.68 L5.46 0.19 L7.54 0.19 L7.83 1.68 L8.97 2.15 L10.23 1.30 L11.70 2.77 L10.85 4.03Z M8.90 6.50 A2.4 2.4 0 1 0 4.10 6.50 A2.4 2.4 0 1 0 8.90 6.50Z" fill="#111" fill-rule="evenodd"/></svg></div>
<div class="a pl" style="left:1591px;width:70px;top:388.500px">Tooltip</div>
<div class="a in" style="left:1668px;top:386.200px;width:226px"></div><div class="a gb" style="left:1893.500px;top:386.200px"><svg width="13" height="13" viewBox="0 0 13 13"><path d="M11.32 5.17 L12.81 5.46 L12.81 7.54 L11.32 7.83 L10.85 8.97 L11.70 10.23 L10.23 11.70 L8.97 10.85 L7.83 11.32 L7.54 12.81 L5.46 12.81 L5.17 11.32 L4.03 10.85 L2.77 11.70 L1.30 10.23 L2.15 8.97 L1.68 7.83 L0.19 7.54 L0.19 5.46 L1.68 5.17 L2.15 4.03 L1.30 2.77 L2.77 1.30 L4.03 2.15 L5.17 1.68 L5.46 0.19 L7.54 0.19 L7.83 1.68 L8.97 2.15 L10.23 1.30 L11.70 2.77 L10.85 4.03Z M8.90 6.50 A2.4 2.4 0 1 0 4.10 6.50 A2.4 2.4 0 1 0 8.90 6.50Z" fill="#111" fill-rule="evenodd"/></svg></div>
<div class="a pl" style="left:1591px;width:70px;top:410.500px">Disabled</div>
<div class="a in" style="left:1668px;top:408.300px;width:226px"></div><div class="a gb" style="left:1893.500px;top:408.300px"><svg width="13" height="13" viewBox="0 0 13 13"><path d="M11.32 5.17 L12.81 5.46 L12.81 7.54 L11.32 7.83 L10.85 8.97 L11.70 10.23 L10.23 11.70 L8.97 10.85 L7.83 11.32 L7.54 12.81 L5.46 12.81 L5.17 11.32 L4.03 10.85 L2.77 11.70 L1.30 10.23 L2.15 8.97 L1.68 7.83 L0.19 7.54 L0.19 5.46 L1.68 5.17 L2.15 4.03 L1.30 2.77 L2.77 1.30 L4.03 2.15 L5.17 1.68 L5.46 0.19 L7.54 0.19 L7.83 1.68 L8.97 2.15 L10.23 1.30 L11.70 2.77 L10.85 4.03Z M8.90 6.50 A2.4 2.4 0 1 0 4.10 6.50 A2.4 2.4 0 1 0 8.90 6.50Z" fill="#111" fill-rule="evenodd"/></svg></div>
<div class="a in" style="left:1668px;top:431px;width:244px"></div>
<!-- between box2 and box3 -->
<div class="a pl" style="left:1591px;width:66px;top:514.500px">Label Type</div>
<div class="a in" style="left:1663.300px;top:512px;width:249px;height:18.500px">Label only</div>
<div class="a pl" style="left:1591px;width:66px;top:536.500px;color:#555">Label Color</div>
<div class="a in" style="left:1663.300px;top:534.300px;width:249px;line-height:16.400px">Default</div>
<!-- box2 -->
<div class="a" style="left:1571.500px;top:432px;width:349px;height:92.300px;overflow:hidden">
 <div class="a" style="left:0;top:0;width:349px;height:93px;background:#f4f4f4"></div>
 <div class="a st" style="left:0;top:0;width:14px;height:93px"></div>
 <div class="a" style="left:14px;top:0;width:5.800px;height:93px;background:linear-gradient(90deg,#b9b9b9 0,#b9b9b9 .8px,#d8d8d8 .8px,#d8d8d8 4.700px,#b8b8b8 4.700px,#b8b8b8 5.800px)"></div>
 <div class="a pl" style="left:19.500px;width:70px;top:1px">Form</div>
 <div class="a in" style="left:96.500px;top:-1px;width:244px"></div>
 <div class="a rs" style="left:19.500px;top:29.400px"><i class="tri"></i><b>Labels &amp; Icons</b></div>
 <div class="a pl" style="left:19.500px;width:66px;top:59.500px">Label</div>
 <div class="a in" style="left:91.800px;top:57.300px;width:231px"></div><div class="a gb" style="left:322px;top:57.300px"><svg width="13" height="13" viewBox="0 0 13 13"><path d="M11.32 5.17 L12.81 5.46 L12.81 7.54 L11.32 7.83 L10.85 8.97 L11.70 10.23 L10.23 11.70 L8.97 10.85 L7.83 11.32 L7.54 12.81 L5.46 12.81 L5.17 11.32 L4.03 10.85 L2.77 11.70 L1.30 10.23 L2.15 8.97 L1.68 7.83 L0.19 7.54 L0.19 5.46 L1.68 5.17 L2.15 4.03 L1.30 2.77 L2.77 1.30 L4.03 2.15 L5.17 1.68 L5.46 0.19 L7.54 0.19 L7.83 1.68 L8.97 2.15 L10.23 1.30 L11.70 2.77 L10.85 4.03Z M8.90 6.50 A2.4 2.4 0 1 0 4.10 6.50 A2.4 2.4 0 1 0 8.90 6.50Z" fill="#111" fill-rule="evenodd"/></svg></div>
 <div class="a in" style="left:91.800px;top:80px;width:249px"></div>
 <div class="a yb" style="left:0;top:0;width:359px;height:92.300px"></div>
</div>
<!-- box3 -->
<div class="a" style="left:1571px;top:539px;width:349px;height:92.500px;overflow:hidden">
 <div class="a" style="left:0;top:0;width:349px;height:93px;background:#f4f4f4"></div>
 <div class="a st" style="left:0;top:0;width:14.500px;height:50px"></div>
 <div class="a" style="left:0;top:53.500px;width:14.500px;height:40px;background:#f0f0f0"></div>
 <div class="a" style="left:0;top:78.700px;width:14.500px;height:4.300px;background:#0095da"></div>
 <div class="a" style="left:14.500px;top:0;width:5.800px;height:93px;background:linear-gradient(90deg,#b9b9b9 0,#b9b9b9 .8px,#d8d8d8 .8px,#d8d8d8 4.700px,#b8b8b8 4.700px,#b8b8b8 5.800px)"></div>
 <div class="a in" style="left:92.300px;top:-5px;width:249px"></div>
 <div class="a rs" style="left:20px;top:24.700px"><i class="tri"></i><b>Styling Overrides</b></div>
 <div class="a pl" style="left:28px;top:55.500px;text-align:left">Class</div>
 <div class="a in" style="left:63.200px;top:53.300px;width:278px;height:27.500px"></div>
 <div class="a" style="left:69.400px;top:57.100px;width:76.500px;height:19.400px;border:1px solid #b5b5b5;border-radius:3px;background:linear-gradient(#f6f6f6,#e6e6e6);color:#555;font-size:13px;line-height:17px"><svg class="a" style="left:5px;top:6.500px" width="6" height="6" viewBox="0 0 6 6"><path d="M.8.800l4.400 4.400M5.200.800L.8 5.200" stroke="#888" stroke-width="1.500"/></svg><span class="a" style="left:16.500px;top:0">deletebtn</span></div>
 <div class="a yb" style="left:0;top:0;width:359px;height:92.500px"></div>
</div>
<!-- dynamic -->
<div class="a rs" style="top:637px"><i class="tri"></i><b>Dynamic Properties</b></div>
<svg class="a" style="left:1600.500px;top:667.500px" width="13" height="13" viewBox="0 0 13 13"><path d="M6.500 0v13M0 6.500h13" stroke="#000" stroke-width="3"/></svg>
<div class="a" style="left:1620px;top:666px;font-size:13px;line-height:17px;color:#111;letter-spacing:-.3px">Add New Property</div>
<div class="a" style="left:1919px;top:0px;width:1px;height:192px;background:#5a58c6"></div>
<div class="a" style="left:1919px;top:284.5px;width:1px;height:147.5px;background:#5a58c6"></div>
<div class="a" style="left:1919px;top:524.3px;width:1px;height:14.700000000000045px;background:#5a58c6"></div>
<div class="a" style="left:1919px;top:631.5px;width:1px;height:237.5px;background:#5a58c6"></div>
<div class="a" style="left:0;top:868px;width:1920px;height:1px;background:rgba(214,60,140,.42)"></div>

</body>
</html>
